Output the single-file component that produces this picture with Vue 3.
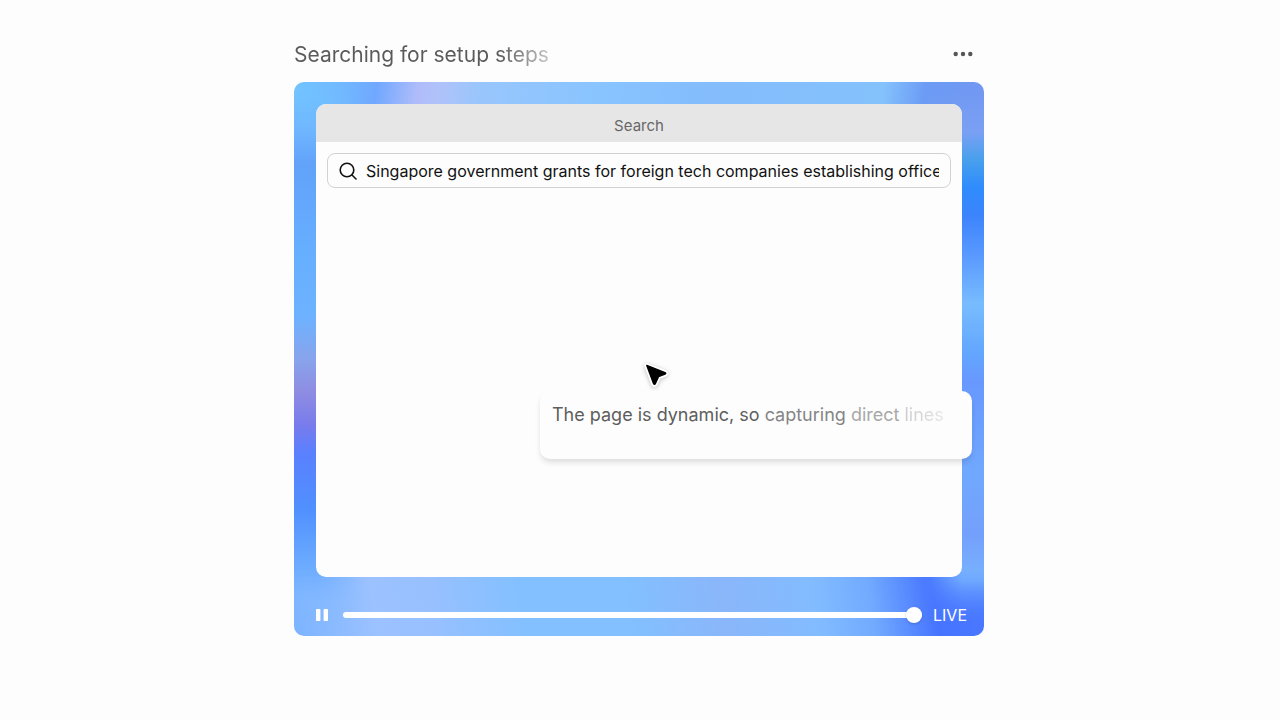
<script setup>
import { ref } from 'vue'

const query = ref('Singapore government grants for foreign tech companies establishing offices')
const progress = ref(100)
const words = [
  { text: 'The page is dynamic, so ', tone: 'solid' },
  { text: 'capturing ', tone: 'medium' },
  { text: 'direct ', tone: 'light' },
  { text: 'lines', tone: 'faint' },
]
</script>

<template>
  <main class="page">
    <section class="session">
      <header class="heading">
        <h1>Searching for setup steps</h1>
        <button class="more" type="button" aria-label="More options">
          <svg width="20" height="6" viewBox="0 0 20 6" fill="currentColor">
            <circle cx="2.7" cy="3" r="2.2" />
            <circle cx="10" cy="3" r="2.2" />
            <circle cx="17.3" cy="3" r="2.2" />
          </svg>
        </button>
      </header>

      <div class="frame">
        <div class="window">
          <div class="titlebar">Search</div>
          <div class="content">
            <label class="search">
              <svg width="18" height="18" viewBox="0 0 18 18" fill="none" stroke="#111" stroke-width="1.6" stroke-linecap="round">
                <circle cx="8" cy="8" r="6.8" />
                <path d="M13 13l4 4" />
              </svg>
              <input v-model="query" type="text" aria-label="Search query" />
            </label>
          </div>
          <svg class="pointer" width="32" height="32" viewBox="0 0 32 32">
            <path d="M6.8 6.5 25 13.6Q26.5 14.3 25 15.1L18.5 17.6 15.2 24.9Q14.4 26 13.6 24.7Z" fill="#fff" stroke="#fff" stroke-width="5" stroke-linejoin="round" />
            <path d="M6.8 6.5 25 13.6Q26.5 14.3 25 15.1L18.5 17.6 15.2 24.9Q14.4 26 13.6 24.7Z" fill="#000" stroke="#000" stroke-width="1.4" stroke-linejoin="round" />
          </svg>
        </div>

        <p class="thought">
          <span v-for="word in words" :key="word.text" :class="word.tone">{{ word.text }}</span>
        </p>

        <div class="player">
          <button class="pause" type="button" aria-label="Pause">
            <svg width="12" height="12" viewBox="0 0 12 12" fill="#fff">
              <rect width="4.4" height="12" rx="0.8" />
              <rect x="7.6" width="4.4" height="12" rx="0.8" />
            </svg>
          </button>
          <input v-model="progress" class="timeline" type="range" min="0" max="100" aria-label="Timeline" />
          <button class="live" type="button">LIVE</button>
        </div>
      </div>
    </section>
  </main>
</template>

<style>
body {
  margin: 0;
  background: #fdfdfd;
}
</style>

<style scoped>
.page {
  padding: 40px 18px 40px 16px;
  font-family: Inter, "Liberation Sans", sans-serif;
}
.session {
  max-width: 690px;
  margin: 0 auto;
}
.heading {
  display: flex;
  align-items: center;
  justify-content: space-between;
  height: 28px;
  margin-bottom: 14px;
  padding-right: 11px;
}
h1 {
  margin: 0;
  padding-top: 2px;
  font-size: 21px;
  font-weight: 400;
  line-height: 28px;
  color: transparent;
  background: linear-gradient(90deg, #5a5a5a 80%, #c4c4c4 100%);
  background-clip: text;
}
button {
  padding: 0;
  border: 0;
  background: none;
  font: inherit;
  cursor: pointer;
}
.more {
  display: flex;
  color: #555;
}
.frame {
  position: relative;
  isolation: isolate;
  padding: 22px 22px 0;
  overflow: hidden;
  border-radius: 10px;
  background:
    linear-gradient(98deg, #72c4ff 0%, #72b8ff 7%, #70a8ff 12%, #b0bcfa 18%, #b0c2fa 21%, #98c6fc 27%, #88c4ff 45%, #84bcfc 60%, #84c2fc 85%, #6c9cf5 91%, #7298f2 100%) top / 100% 30px no-repeat,
    linear-gradient(82deg, #7cb4ff 0%, #9cc2ff 12%, #98c0ff 20%, #82c0ff 34%, #82c0ff 48%, #8ab6fa 62%, #82bcff 75%, #72aaff 83%, #4674ff 92%, #4a78ff 100%) bottom / 100% 80px no-repeat;
}
/* Vertical colour bands along the two sides, faded into the top and bottom bands. */
.frame::before,
.frame::after {
  content: "";
  position: absolute;
  z-index: -1;
  top: 0;
  bottom: 0;
  width: 70px;
  mask-composite: intersect;
}
.frame::before {
  left: 0;
  background: linear-gradient(#72c4ff 0%, #70b8ff 8%, #62a2fa 15%, #66aeff 30%, #6cb2ff 42%, #88a4ec 50%, #8e8ce2 56%, #787cec 62%, #5a80ff 67%, #5090ff 77%, #68a8ff 86%, #80b8ff 94%, #80b8ff 100%);
  mask-image: linear-gradient(transparent, #000 30px, #000 88%, transparent 100%), linear-gradient(90deg, #000 22px, transparent);
}
.frame::after {
  right: 0;
  background: linear-gradient(#7298f2 0%, #7aa0f4 9%, #48a0ec 14%, #2f8cfc 19%, #3c84fc 24%, #5898ff 31%, #78bcff 40%, #62a6ff 49%, #6898ff 54%, #70a8ff 70%, #74a0fc 82%, #78b4ff 90%, #5c90ff 95%, #4a78ff 100%);
  mask-image: linear-gradient(transparent, #000 30px, #000 88%, transparent 98%), linear-gradient(270deg, #000 22px, transparent 60px);
}
.window {
  position: relative;
  height: 473px;
  overflow: hidden;
  border-radius: 10px;
  background: #fdfdfd;
}
.titlebar {
  height: 38px;
  background: #e6e6e6;
  color: #666;
  font-size: 15px;
  line-height: 43px;
  text-align: center;
}
.content {
  padding: 11px;
}
.search {
  display: flex;
  align-items: center;
  gap: 9px;
  box-sizing: border-box;
  height: 35px;
  padding: 0 11px;
  border: 1px solid #d2d2d2;
  border-radius: 8px;
}
.search svg {
  flex: none;
}
.search input {
  flex: 1;
  min-width: 0;
  padding: 0;
  border: 0;
  outline: 0;
  background: none;
  color: #111;
  font: inherit;
  font-size: 16px;
  line-height: 24px;
}
.pointer {
  position: absolute;
  top: 255px;
  left: 324px;
  filter: drop-shadow(0 1px 2px rgb(0 0 0 / 25%));
}
.thought {
  position: absolute;
  right: 12px;
  top: 309px;
  box-sizing: border-box;
  width: 432px;
  height: 68px;
  margin: 0;
  padding: 10px 12px;
  border-radius: 10px;
  background: #fdfdfd;
  box-shadow: 0 4px 6px -1px rgb(0 0 0 / 14%);
  font-size: 18px;
  line-height: 28px;
  white-space: pre;
}
.solid {
  color: #5e5e5e;
}
.medium {
  color: #858585;
}
.light {
  color: #a8a8a8;
}
.faint {
  color: transparent;
  background: linear-gradient(90deg, #ccc, #e6e6e6);
  background-clip: text;
}
.player {
  display: flex;
  align-items: center;
  padding: 26px 0 9px;
  margin-right: -5px;
}
.pause {
  display: flex;
}
.timeline {
  flex: 1;
  min-width: 0;
  height: 18px;
  margin: 0 11px 0 15px;
  appearance: none;
  background: none;
}
.timeline::-webkit-slider-runnable-track {
  height: 6px;
  border-radius: 3px;
  background: #fff;
}
.timeline::-webkit-slider-thumb {
  appearance: none;
  width: 16px;
  height: 16px;
  margin-top: -5px;
  border-radius: 50%;
  background: #fff;
  box-shadow: 0 1px 3px rgb(0 0 0 / 18%);
}
.live {
  color: #fff;
  font-size: 16px;
  line-height: 24px;
}
</style>
